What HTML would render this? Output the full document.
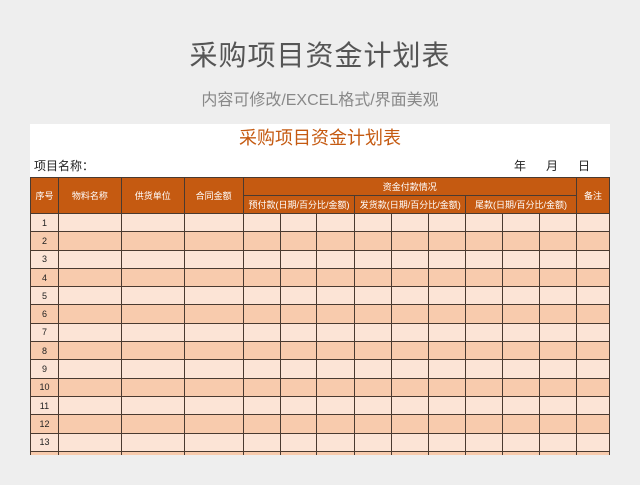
<!DOCTYPE html><html><head><meta charset="utf-8"><style>
body{margin:0;width:640px;height:485px;background:#eeeeee;font-family:"Liberation Sans","Noto Sans CJK SC",sans-serif;position:relative;overflow:hidden}
.t1{position:absolute;top:34px;left:0;width:640px;text-align:center;font-size:28px;color:#555;letter-spacing:1px}
.t2{position:absolute;top:86px;left:0;width:640px;text-align:center;font-size:16px;color:#888}
.panel{position:absolute;left:30px;top:124px;width:580px;height:331px;background:#fff;overflow:hidden}
.h{position:absolute;top:0;left:0;width:580px;text-align:center;font-size:18px;color:#c55a11}
.n{position:absolute;left:4px;top:33px;font-size:12px;color:#222}
.d{position:absolute;right:20px;top:33px;font-size:12px;color:#222;word-spacing:0}
table{position:absolute;left:0;top:53px;border-collapse:collapse;table-layout:fixed}
td{border:1px solid #4a3a30;padding:0;text-align:center;font-size:9px;height:17.3px;color:#222}
th{border:1px solid #4a3a30;background:#c55a11;color:#fff;font-weight:normal;font-size:9px;padding:0;height:17px}
tr.o td{background:#fce4d6}tr.e td{background:#f8cbad}
</style></head><body>
<div class="t1">采购项目资金计划表</div>
<div class="t2">内容可修改/EXCEL格式/界面美观</div>
<div class="panel">
<div class="h">采购项目资金计划表</div>
<div class="n">项目名称：</div>
<div class="d">年&nbsp;&nbsp;&nbsp;&nbsp;&nbsp;&nbsp;月&nbsp;&nbsp;&nbsp;&nbsp;&nbsp;&nbsp;日</div>
<table>
<colgroup><col style="width:28px"><col style="width:63px"><col style="width:63px"><col style="width:59px"><col style="width:37px"><col style="width:37px"><col style="width:38px"><col style="width:37px"><col style="width:37px"><col style="width:37px"><col style="width:37px"><col style="width:37px"><col style="width:37px"><col style="width:33px"></colgroup>
<tr><th rowspan="2">序号</th><th rowspan="2">物料名称</th><th rowspan="2">供货单位</th><th rowspan="2">合同金额</th><th colspan="9">资金付款情况</th><th rowspan="2">备注</th></tr>
<tr><th colspan="3">预付款(日期/百分比/金额)</th><th colspan="3">发货款(日期/百分比/金额)</th><th colspan="3">尾款(日期/百分比/金额)</th></tr>
<tr class="o"><td>1</td><td></td><td></td><td></td><td></td><td></td><td></td><td></td><td></td><td></td><td></td><td></td><td></td><td></td></tr>
<tr class="e"><td>2</td><td></td><td></td><td></td><td></td><td></td><td></td><td></td><td></td><td></td><td></td><td></td><td></td><td></td></tr>
<tr class="o"><td>3</td><td></td><td></td><td></td><td></td><td></td><td></td><td></td><td></td><td></td><td></td><td></td><td></td><td></td></tr>
<tr class="e"><td>4</td><td></td><td></td><td></td><td></td><td></td><td></td><td></td><td></td><td></td><td></td><td></td><td></td><td></td></tr>
<tr class="o"><td>5</td><td></td><td></td><td></td><td></td><td></td><td></td><td></td><td></td><td></td><td></td><td></td><td></td><td></td></tr>
<tr class="e"><td>6</td><td></td><td></td><td></td><td></td><td></td><td></td><td></td><td></td><td></td><td></td><td></td><td></td><td></td></tr>
<tr class="o"><td>7</td><td></td><td></td><td></td><td></td><td></td><td></td><td></td><td></td><td></td><td></td><td></td><td></td><td></td></tr>
<tr class="e"><td>8</td><td></td><td></td><td></td><td></td><td></td><td></td><td></td><td></td><td></td><td></td><td></td><td></td><td></td></tr>
<tr class="o"><td>9</td><td></td><td></td><td></td><td></td><td></td><td></td><td></td><td></td><td></td><td></td><td></td><td></td><td></td></tr>
<tr class="e"><td>10</td><td></td><td></td><td></td><td></td><td></td><td></td><td></td><td></td><td></td><td></td><td></td><td></td><td></td></tr>
<tr class="o"><td>11</td><td></td><td></td><td></td><td></td><td></td><td></td><td></td><td></td><td></td><td></td><td></td><td></td><td></td></tr>
<tr class="e"><td>12</td><td></td><td></td><td></td><td></td><td></td><td></td><td></td><td></td><td></td><td></td><td></td><td></td><td></td></tr>
<tr class="o"><td>13</td><td></td><td></td><td></td><td></td><td></td><td></td><td></td><td></td><td></td><td></td><td></td><td></td><td></td></tr>
<tr class="e"><td></td><td></td><td></td><td></td><td></td><td></td><td></td><td></td><td></td><td></td><td></td><td></td><td></td><td></td></tr>
</table>
</div>
</body></html>
